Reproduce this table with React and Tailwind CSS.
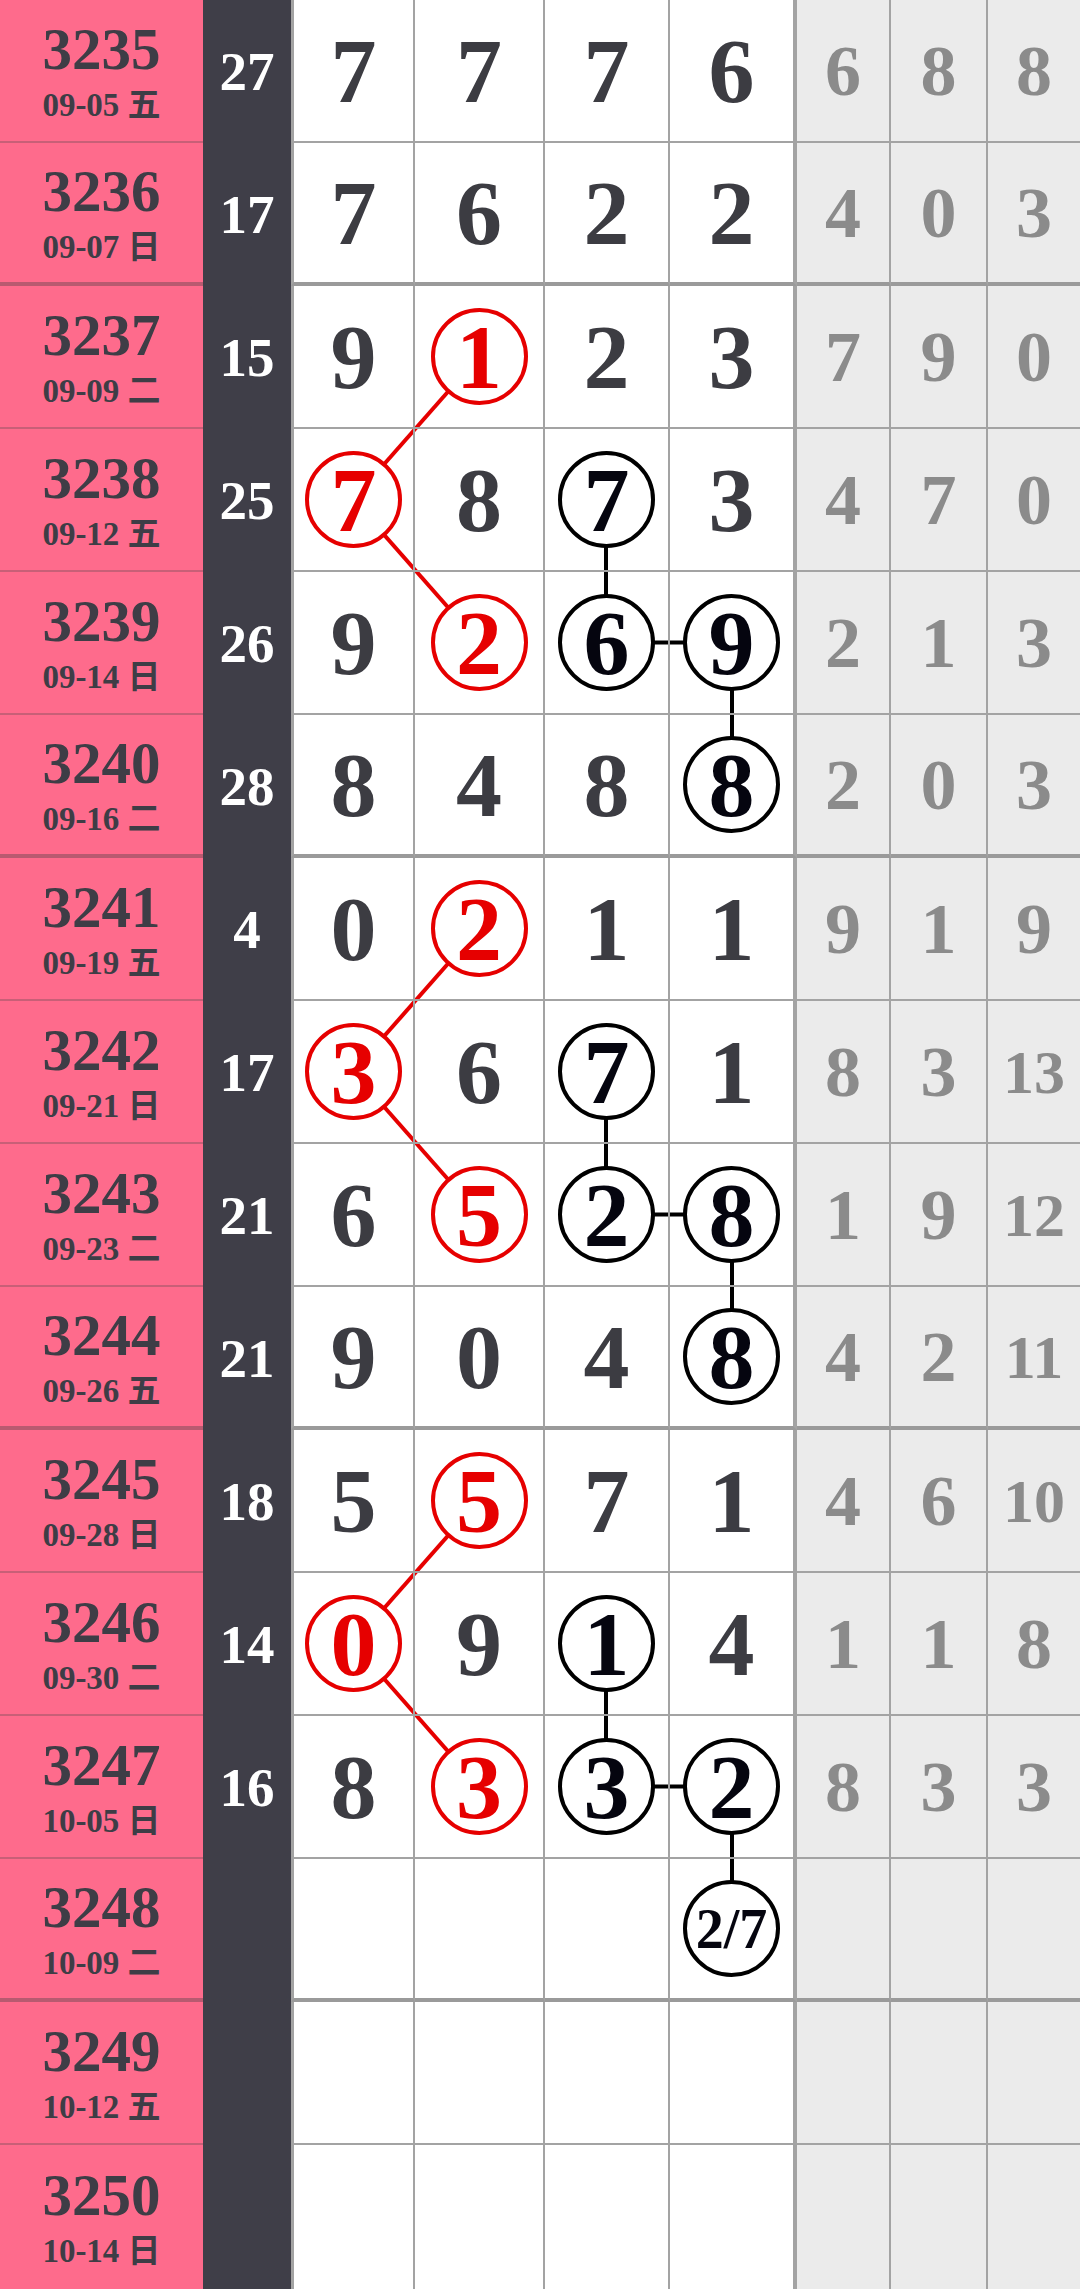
const rows = [
  { id: '3235', date: '09-05 五', sum: '27', nums: ['7', '7', '7', '6'], tail: ['6', '8', '8'] },
  { id: '3236', date: '09-07 日', sum: '17', nums: ['7', '6', '2', '2'], tail: ['4', '0', '3'] },
  { id: '3237', date: '09-09 二', sum: '15', nums: ['9', '1', '2', '3'], tail: ['7', '9', '0'] },
  { id: '3238', date: '09-12 五', sum: '25', nums: ['7', '8', '7', '3'], tail: ['4', '7', '0'] },
  { id: '3239', date: '09-14 日', sum: '26', nums: ['9', '2', '6', '9'], tail: ['2', '1', '3'] },
  { id: '3240', date: '09-16 二', sum: '28', nums: ['8', '4', '8', '8'], tail: ['2', '0', '3'] },
  { id: '3241', date: '09-19 五', sum: '4', nums: ['0', '2', '1', '1'], tail: ['9', '1', '9'] },
  { id: '3242', date: '09-21 日', sum: '17', nums: ['3', '6', '7', '1'], tail: ['8', '3', '13'] },
  { id: '3243', date: '09-23 二', sum: '21', nums: ['6', '5', '2', '8'], tail: ['1', '9', '12'] },
  { id: '3244', date: '09-26 五', sum: '21', nums: ['9', '0', '4', '8'], tail: ['4', '2', '11'] },
  { id: '3245', date: '09-28 日', sum: '18', nums: ['5', '5', '7', '1'], tail: ['4', '6', '10'] },
  { id: '3246', date: '09-30 二', sum: '14', nums: ['0', '9', '1', '4'], tail: ['1', '1', '8'] },
  { id: '3247', date: '10-05 日', sum: '16', nums: ['8', '3', '3', '2'], tail: ['8', '3', '3'] },
  { id: '3248', date: '10-09 二', sum: '', nums: ['', '', '', '2/7'], tail: ['', '', ''] },
  { id: '3249', date: '10-12 五', sum: '', nums: ['', '', '', ''], tail: ['', '', ''] },
  { id: '3250', date: '10-14 日', sum: '', nums: ['', '', '', ''], tail: ['', '', ''] },
];

const red = ['2-1', '3-0', '4-1', '6-1', '7-0', '8-1', '10-1', '11-0', '12-1'];
const black = ['3-2', '4-2', '4-3', '5-3', '7-2', '8-2', '8-3', '9-3', '11-2', '12-2', '12-3', '13-3'];

const colX = [353, 479, 606, 732];
const isThick = (i) => i === 1 || i === 5 || i === 9 || i === 13;
const rowH = (i) => (i === 15 ? 144 : 143);
const rowY = (i) => {
  const border = i === 15 ? 0 : isThick(i) ? 4 : 2;
  return i * 143 + (rowH(i) - border) / 2;
};

// connector lines: each group of four draws start at row g
const groups = [2, 6, 10];

const widths = ['w-[124px] border-l-[3px] border-l-[#a3a3a3]', 'w-[130px]', 'w-[125px]', 'w-[127px]'];
const tailWidths = ['w-[94px] border-r-2', 'w-[97px] border-r-2', 'flex-1'];

function Cell({ value, mark, small }) {
  if (!value) return null;
  if (mark === 'red') {
    return (
      <div className="w-[97px] h-[97px] rounded-full border-4 border-[#e60000] bg-white flex items-center justify-center text-[#e60000] text-[92px] leading-none">
        {value}
      </div>
    );
  }
  if (mark === 'black') {
    return (
      <div className={`w-[97px] h-[97px] rounded-full border-4 border-black bg-white flex items-center justify-center text-[#05050f] leading-none ${small ? 'text-[56px]' : 'text-[92px]'}`}>
        {value}
      </div>
    );
  }
  return <span className="text-[#3c3c42] text-[92px] leading-none">{value}</span>;
}

export default function App() {
  return (
    <div className="relative w-[1080px] h-[2289px] overflow-hidden bg-white font-['Liberation_Serif','Noto_Sans_CJK_SC',serif] font-bold">
      <svg className="absolute left-0 top-0" width="1080" height="2289">
        {groups.map((g) => (
          <g key={g}>
            <line x1={colX[1]} y1={rowY(g)} x2={colX[0]} y2={rowY(g + 1)} stroke="#e60000" strokeWidth="4" />
            <line x1={colX[0]} y1={rowY(g + 1)} x2={colX[1]} y2={rowY(g + 2)} stroke="#e60000" strokeWidth="4" />
            <line x1={colX[2]} y1={rowY(g + 1)} x2={colX[2]} y2={rowY(g + 2)} stroke="#000" strokeWidth="4" />
            <line x1={colX[2]} y1={rowY(g + 2)} x2={colX[3]} y2={rowY(g + 2)} stroke="#000" strokeWidth="4" />
            <line x1={colX[3]} y1={rowY(g + 2)} x2={colX[3]} y2={rowY(g + 3)} stroke="#000" strokeWidth="4" />
          </g>
        ))}
      </svg>

      {rows.map((row, i) => {
        const last = i === 15;
        const thick = isThick(i);
        const pinkB = last ? '' : thick ? 'border-b-4 border-b-[#b85a70]' : 'border-b-2 border-b-[#c85f77]';
        const gridB = last ? '' : thick ? 'border-b-4 border-b-[#9a9a9a]' : 'border-b-2 border-b-[#a3a3a3]';
        return (
          <div key={row.id} className={`relative flex ${last ? 'h-[144px]' : 'h-[143px]'}`}>
            <div className={`w-[203px] shrink-0 bg-[#fe6b8c] flex flex-col items-center justify-center gap-[10px] text-[#3e3d46] ${pinkB}`}>
              <span className="text-[59px] leading-none">{row.id}</span>
              <span className="text-[33px] leading-none">{row.date}</span>
            </div>
            <div className="w-[88px] shrink-0 bg-[#3f3e48] flex items-center justify-center text-white text-[55px] leading-none">
              {row.sum}
            </div>
            {row.nums.map((n, c) => {
              const key = `${i}-${c}`;
              const mark = red.includes(key) ? 'red' : black.includes(key) ? 'black' : null;
              return (
                <div
                  key={c}
                  className={`shrink-0 flex items-center justify-center border-r-[#a3a3a3] ${c === 3 ? 'border-r-4 border-r-[#9a9a9a]' : 'border-r-2'} ${widths[c]} ${gridB}`}
                >
                  <Cell value={n} mark={mark} small={n.length > 1} />
                </div>
              );
            })}
            {row.tail.map((t, c) => (
              <div
                key={c}
                className={`bg-[#ebebeb] border-r-[#a3a3a3] flex items-center justify-center text-[#8b8b8b] leading-none ${t.length > 1 ? 'text-[62px]' : 'text-[72px]'} ${tailWidths[c]} ${gridB}`}
              >
                {t}
              </div>
            ))}
          </div>
        );
      })}
    </div>
  );
}
